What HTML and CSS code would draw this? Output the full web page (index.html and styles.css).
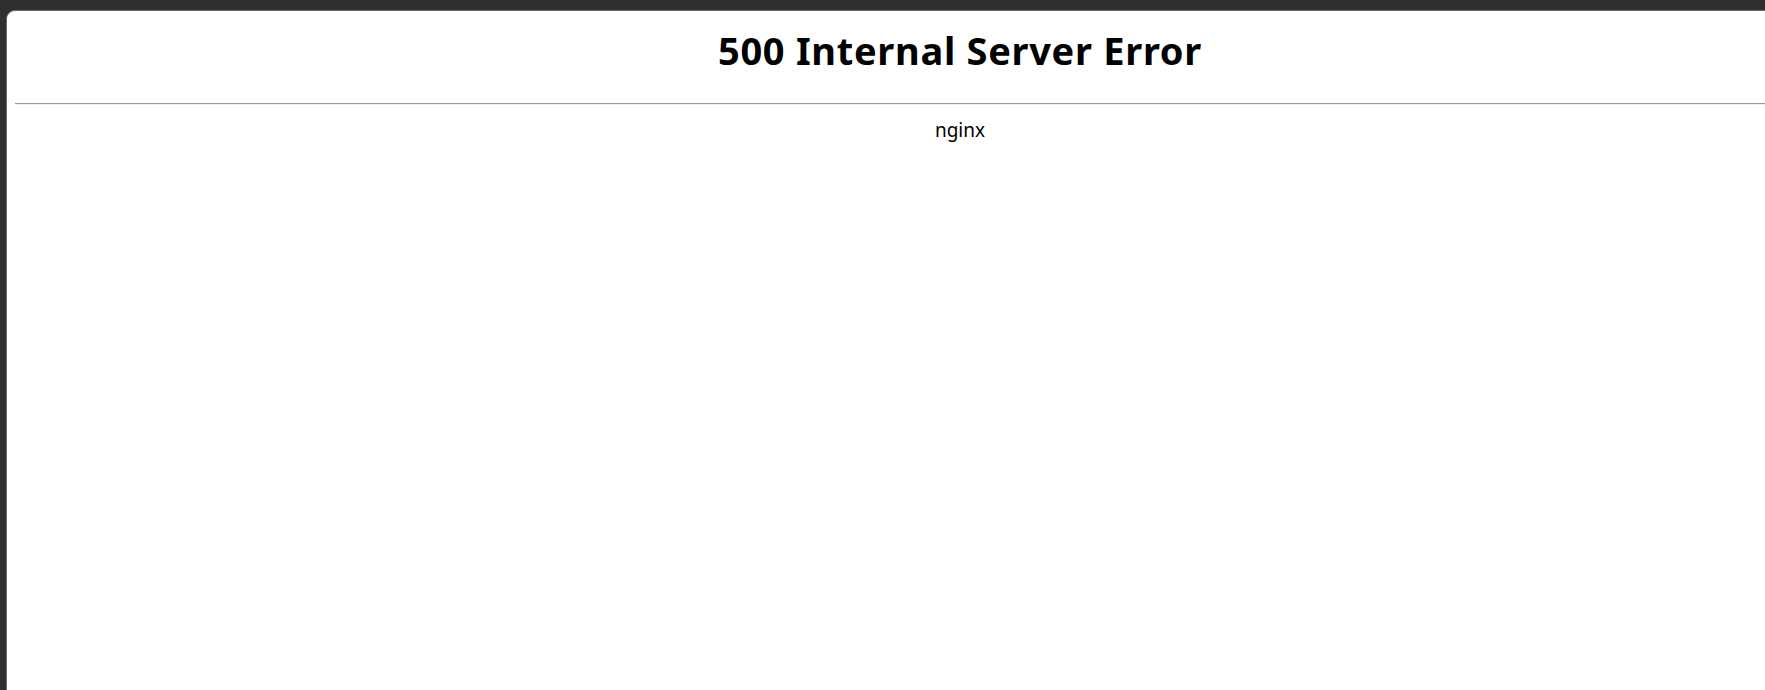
FILE: index.html
```html
<!DOCTYPE html>
<html>
<head>
<meta charset="utf-8">
<title>500 Internal Server Error</title>
<link rel="stylesheet" href="styles.css">
</head>
<body>
<div class="window">
  <div class="panel">
    <div class="page">
      <h1 class="title">500 Internal Server Error</h1>
      <hr class="rule">
      <div class="server">nginx</div>
    </div>
  </div>
</div>
</body>
</html>
```

FILE: styles.css
```css
html, body {
  margin: 0;
  padding: 0;
  height: 100%;
  overflow: hidden;
  background: #2f2f2f;
}
.window {
  height: 100%;
  padding: 10px 0 0 6px;
  box-sizing: border-box;
}
.panel {
  width: 1906px;
  height: 100%;
  background: #ffffff;
  border-top: 1px solid #6a6a6a;
  border-left: 1px solid #6a6a6a;
  border-top-left-radius: 9px;
  box-sizing: content-box;
}
.page {
  padding: 8px;
  font-family: "Noto Sans", "Open Sans", sans-serif;
  color: #000;
}
.title {
  margin: 7px 0 0;
  text-align: center;
  font-size: 38px;
  line-height: 48px;
  font-weight: 700;
  letter-spacing: 0.7px;
}
.rule {
  margin: 29px 0 0;
  border: 0;
  border-top: 1px solid #9a9a9a;
  border-bottom: 1px solid #eeeeee;
  height: 0;
}
.server {
  margin-top: 13px;
  text-align: center;
  font-size: 19px;
  line-height: 24px;
}
```
